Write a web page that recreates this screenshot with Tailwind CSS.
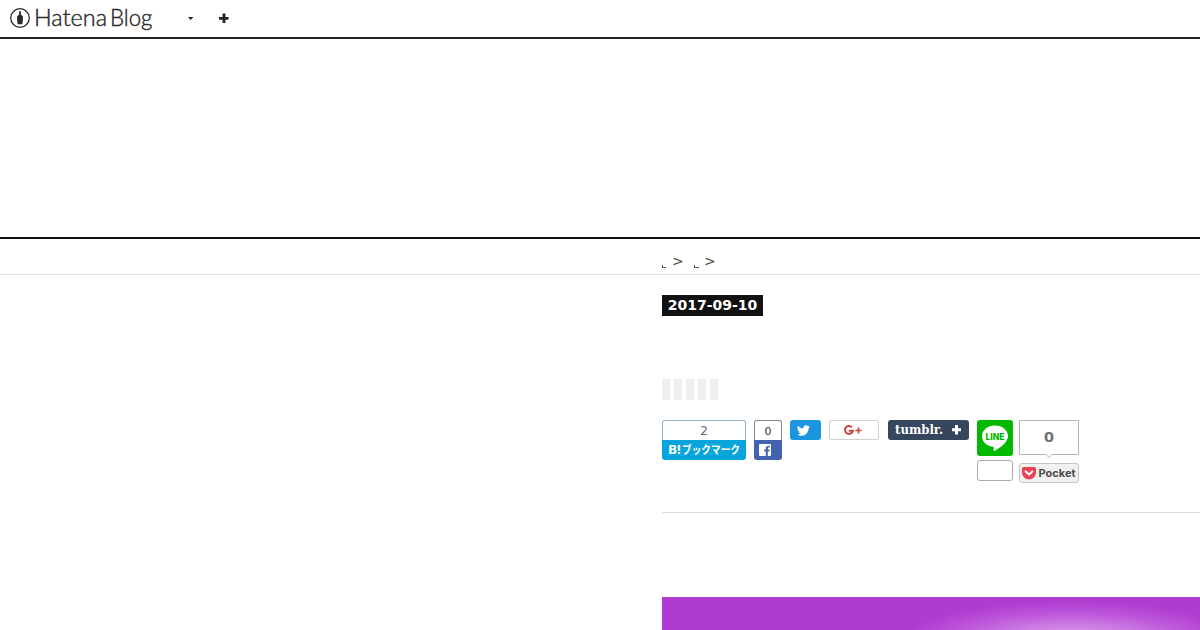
<!DOCTYPE html>
<html lang="ja">
<head>
    <meta charset="UTF-8">
    <meta name="viewport" content="width=device-width, initial-scale=1.0">
    <title>Hatena Blog</title>
    <script src="https://cdn.jsdelivr.net/npm/@tailwindcss/browser@4"></script>
</head>
<body class="h-[630px] overflow-hidden bg-white font-['DejaVu_Sans',sans-serif] text-[#454545]">

    <!-- Global header -->
    <header class="flex h-[39px] items-start border-b-2 border-[#222] pl-[9px]">
        <svg class="mt-[7px] h-[23px] w-[22px] shrink-0" viewBox="0 0 22 23">
            <circle cx="11" cy="11" r="9.3" fill="none" stroke="#2d2a2b" stroke-width="1.3"/>
            <path d="M10.100 4.200h1.800v3.200l2 1.900v4l-.6 4H8.700l-.6-4v-4l2-1.900z" fill="#2d2a2b"/>
        </svg>
        <svg class="h-[36px] w-[125px] shrink-0" viewBox="0 0 125 36" font-family="Lato, sans-serif" font-weight="300" font-size="22.500" fill="#2d2a2b" stroke="#2d2a2b" stroke-width="0.4">
            <text x="3" y="25.500" textLength="73" lengthAdjust="spacingAndGlyphs">Hatena</text>
            <text x="79" y="25.500" textLength="42.500" lengthAdjust="spacingAndGlyphs">Blog</text>
        </svg>
        <svg class="mt-[17px] ml-[32px] h-[4px] w-[6px]" viewBox="0 0 6 4"><path d="M0 0h5.4L2.7 3z" fill="#222"/></svg>
        <svg class="mt-[13px] ml-[25px] h-[10px] w-[10px]" viewBox="0 0 10 10"><path d="M3.600 0.500h2.800v3.500H9.500v2.800H6.400V10H3.600V6.800H0V4h3.600z" fill="#222"/></svg>
    </header>

    <div class="h-[200px] border-b-2 border-[#111]"></div>

    <nav class="flex h-[36px] border-b border-[#ddd] pl-[662px] text-[14px] leading-[18px]">
        <svg class="mt-[26px] h-[3px] w-[4px]" viewBox="0 0 4 3"><path d="M0 0h1v2h3v1H0z" fill="#555"/></svg>
        <span class="mt-[13px] ml-[6px] w-[11px]">&gt;</span>
        <svg class="mt-[26px] ml-[11px] h-[3px] w-[5px]" viewBox="0 0 5 3"><path d="M0 0h1v2h4v1H0z" fill="#555"/></svg>
        <span class="mt-[13px] ml-[5px]">&gt;</span>
    </nav>

    <main class="ml-[662px] pt-5">
        <time class="block h-[21px] w-[101px] bg-[#111] text-center text-[14px] leading-[21px] font-bold text-white">2017-09-10</time>

        <div class="mt-[63px] flex gap-1">
            <span class="h-[21px] w-2 bg-[#efefef]"></span>
            <span class="h-[21px] w-2 bg-[#efefef]"></span>
            <span class="h-[21px] w-2 bg-[#efefef]"></span>
            <span class="h-[21px] w-2 bg-[#efefef]"></span>
            <span class="h-[21px] w-2 bg-[#efefef]"></span>
        </div>

        <!-- Share buttons -->
        <div class="mt-5 flex h-[92px] items-start gap-2">
            <div class="h-10 w-[84px]">
                <div class="h-5 rounded-t-[3px] border border-b-0 border-[#91b5c9] text-center text-[12px] leading-[20px] text-[#6b5d88]">2</div>
                <svg class="block h-5 w-[84px] overflow-visible rounded-b-[3px] bg-[#08a4dc]" viewBox="0 0 84 20" fill="#fff" font-weight="700">
                    <text x="6" y="14.2" font-family="Open Sans, sans-serif" font-size="12.500" textLength="13" lengthAdjust="spacingAndGlyphs">B!</text>
                    <text x="20" y="14" font-family="Noto Sans CJK JP, sans-serif" font-size="11" textLength="58" lengthAdjust="spacingAndGlyphs">ブックマーク</text>
                </svg>
            </div>

            <div class="h-10 w-7">
                <div class="h-5 rounded-t-[3px] border border-b-0 border-[#888] text-center text-[11px] leading-[21px] text-[#333]">0</div>
                <svg class="block h-5 w-7 rounded-b-[3px] bg-[#4362b0]" viewBox="0 0 28 20">
                    <rect x="5" y="4" width="12" height="12" rx="1" fill="#fff"/>
                    <path d="M11.800 16v-4.500h-1.600V9.600h1.600V8.400c0-1.700 1-2.600 2.600-2.600h1.300v1.800h-.9c-.8 0-1 .4-1 1v1h1.900l-.3 1.900h-1.600V16z" fill="#4362b0"/>
                </svg>
            </div>

            <div class="flex h-5 w-[31px] items-center justify-center rounded-[3px] bg-[#1b95e0] pr-1">
                <svg class="h-[13px] w-[13px]" viewBox="0 0 24 24"><path d="M23.95 4.57a10 10 0 0 1-2.82.77 4.96 4.96 0 0 0 2.16-2.72c-.95.55-2 .95-3.13 1.18a4.92 4.92 0 0 0-8.38 4.48C7.69 8.09 4.07 6.13 1.64 3.16a4.93 4.93 0 0 0 1.52 6.57 4.9 4.9 0 0 1-2.23-.61v.06a4.92 4.92 0 0 0 3.95 4.83 5 5 0 0 1-2.21.08 4.94 4.94 0 0 0 4.6 3.42A9.87 9.87 0 0 1 0 19.54a14 14 0 0 0 7.55 2.21c9.05 0 14-7.5 14-13.98v-.64a9.94 9.94 0 0 0 2.4-2.56z" fill="#fff"/></svg>
            </div>

            <div class="h-5 w-[50px] rounded-[2px] border border-[#d0d0d0]">
                <svg class="block h-[18px] w-[48px]" viewBox="0 0 48 18" fill="none" stroke="#cf4437" stroke-width="2">
                    <path d="M21.900 6.200A4 4 0 1 0 22.900 9.700H18.800"/>
                    <path d="M28.500 6.500v6M25.500 9.500h6" stroke-width="1.6"/>
                </svg>
            </div>

            <div class="ml-[1px] h-5 w-[81px] rounded-[3px] bg-[#36465d]">
                <svg class="block h-5 w-[81px]" viewBox="0 0 81 20" fill="#fff">
                    <text x="7" y="14" font-family="DejaVu Serif, serif" font-weight="700" font-size="12" textLength="48" lengthAdjust="spacingAndGlyphs">tumblr.</text>
                    <path d="M67 5h3v3.200h3v3h-3v3.200h-3v-3.200h-3v-3h3z"/>
                </svg>
            </div>

            <div class="w-9">
                <svg class="block h-9 w-9" viewBox="0 0 36 36">
                    <rect width="36" height="36" rx="3" fill="#00b900"/>
                    <path d="M18 5.5C10.6 5.5 5 10.2 5 16.3c0 5.3 4.5 9.6 10.6 10.5 1.5.3 1.3 1.2 1 3.3-.1.8.5 1 1.2.6C22.3 28.500 31 22.600 31 16.300 31 10.200 25.400 5.500 18 5.500z" fill="#fff"/>
                    <text x="8.500" y="20" font-family="Inter, sans-serif" font-weight="800" font-size="9" textLength="19" lengthAdjust="spacingAndGlyphs" fill="#00b900">LINE</text>
                </svg>
                <div class="mt-1 h-[21px] rounded-[3px] border border-[#aaa]"></div>
            </div>

            <div class="-ml-0.5 w-[60px]">
                <svg class="block h-[39px] w-[60px]" viewBox="0 0 60 39">
                    <path d="M.5 .5h59v34H33L30 37.500 27 34.500H.5z" fill="#fff" stroke="#b5b5b5"/>
                    <text x="30" y="22" text-anchor="middle" font-family="Open Sans, sans-serif" font-weight="700" font-size="14" textLength="10" lengthAdjust="spacingAndGlyphs" fill="#707070">0</text>
                </svg>
                <div class="mt-1 h-5 rounded-[3px] border border-[#c4c4c4] bg-[#f1f1f1]">
                    <svg class="block h-[18px] w-[58px]" viewBox="0 0 58 18">
                        <path d="M3.500 3h11q1.500 0 1.500 1.500V8.500a7 7 0 0 1-14 0V4.500Q2 3 3.500 3z" fill="#ee4056"/>
                        <path d="M5.700 7.400L9 10.500l3.300-3.100" fill="none" stroke="#fff" stroke-width="2" stroke-linecap="round" stroke-linejoin="round"/>
                        <text x="18.500" y="13" font-family="Inter, sans-serif" font-weight="700" font-size="11" textLength="37" lengthAdjust="spacingAndGlyphs" fill="#4a4a4a">Pocket</text>
                    </svg>
                </div>
            </div>
        </div>

        <div class="border-t border-[#ddd]"></div>

        <div class="mt-[84px] h-[33px] bg-[#b03bd0] bg-[radial-gradient(ellipse_175px_44px_at_410px_48px,#dda0ec_0%,#d48ae6_35%,#bd57da_72%,#b03bd0_100%)]"></div>
    </main>

</body>
</html>
